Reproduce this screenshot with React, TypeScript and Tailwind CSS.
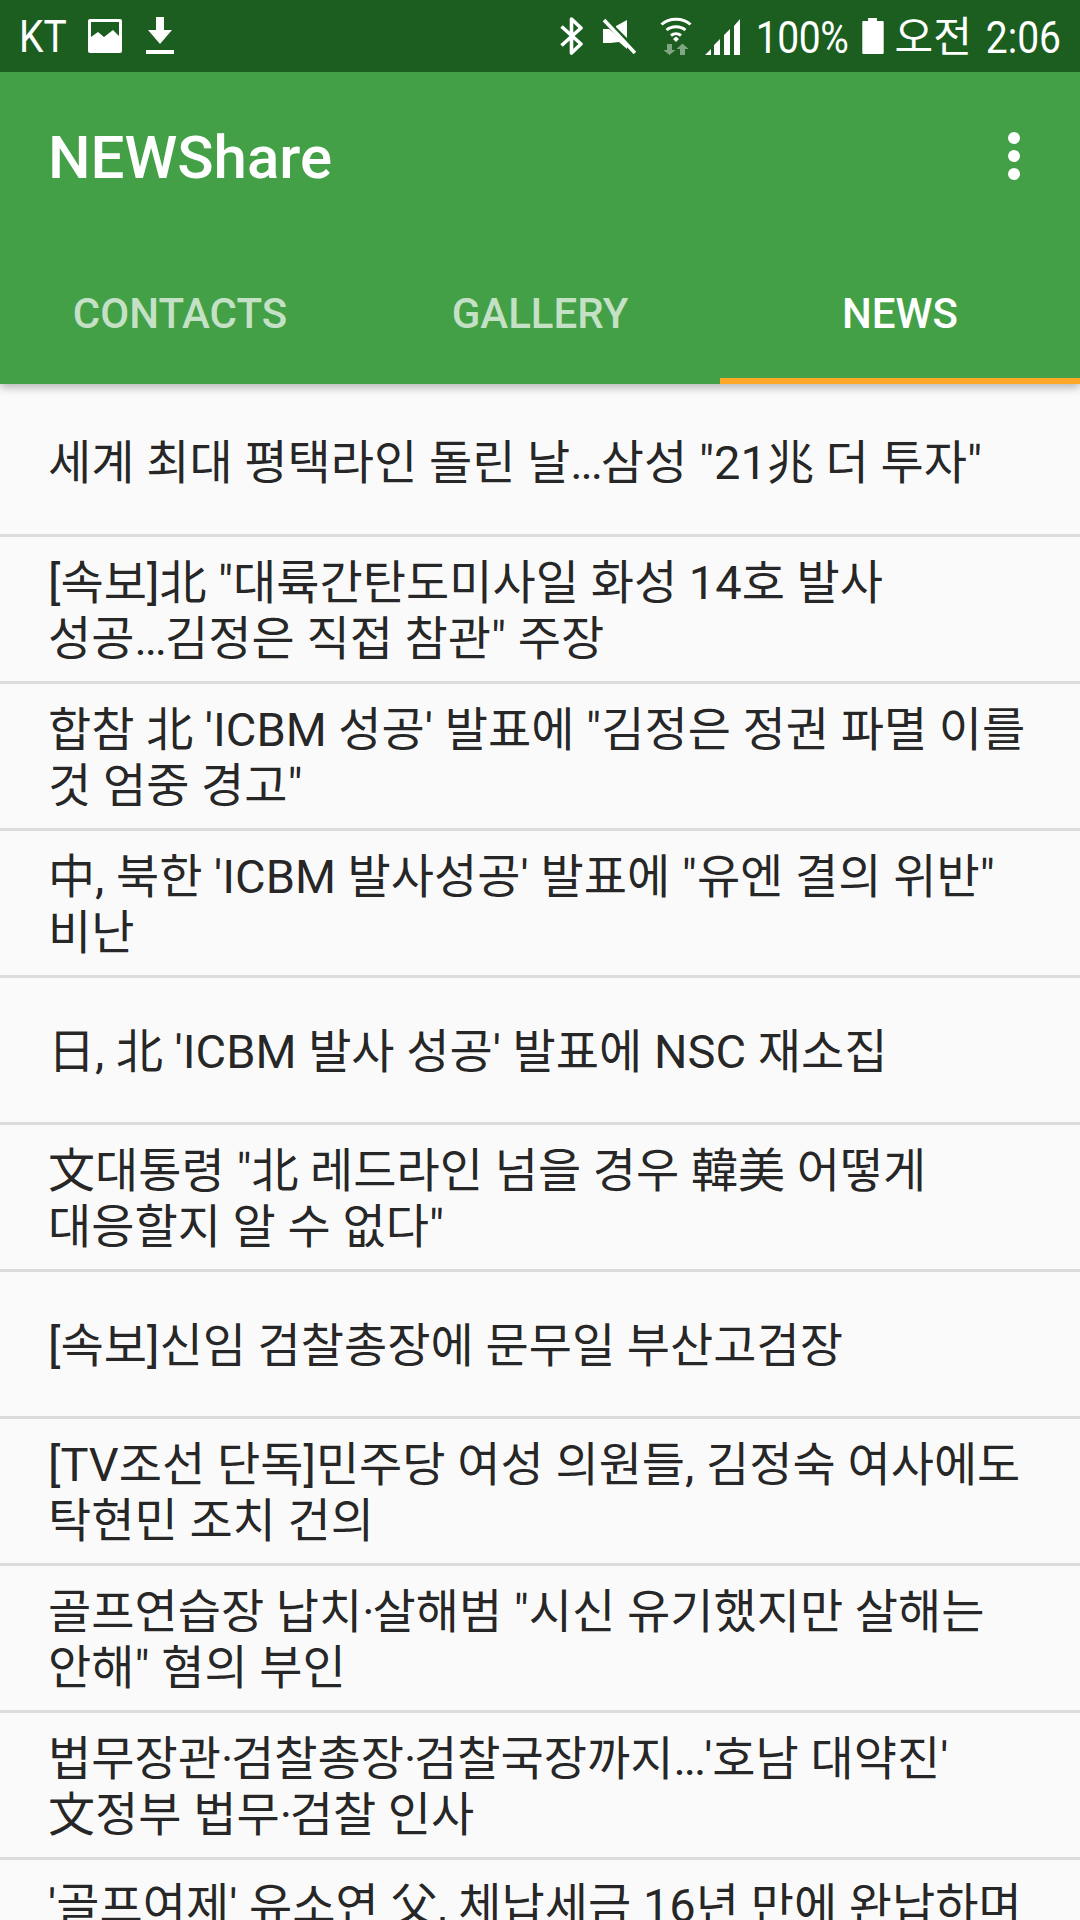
const rows: string[][] = [
  ['세계 최대 평택라인 돌린 날...삼성 "21兆 더 투자"'],
  ['[속보]北 "대륙간탄도미사일 화성 14호 발사', '성공...김정은 직접 참관" 주장'],
  ["합참 北 'ICBM 성공' 발표에 \"김정은 정권 파멸 이를", '것 엄중 경고"'],
  ["中, 북한 'ICBM 발사성공' 발표에 \"유엔 결의 위반\"", '비난'],
  ["日, 北 'ICBM 발사 성공' 발표에 NSC 재소집"],
  ['文대통령 "北 레드라인 넘을 경우 韓美 어떻게', '대응할지 알 수 없다"'],
  ['[속보]신임 검찰총장에 문무일 부산고검장'],
  ['[TV조선 단독]민주당 여성 의원들, 김정숙 여사에도', '탁현민 조치 건의'],
  ['골프연습장 납치·살해범 "시신 유기했지만 살해는', '안해" 혐의 부인'],
  ["법무장관·검찰총장·검찰국장까지...'호남 대약진'", '文정부 법무·검찰 인사'],
  ["'골프여제' 유소연 父, 체납세금 16년 만에 완납하며", '화제'],
];

function Line({ text }: { text: string }) {
  const parts = text.split(/(\.\.\.|·)/);
  return (
    <div className="whitespace-nowrap">
      {parts.map((p, i) =>
        p === '...' || p === '·' ? (
          <span key={i} className="tracking-[-2.2px]">{p}</span>
        ) : (
          <span key={i}>{p}</span>
        ),
      )}
    </div>
  );
}

function StatusLeft() {
  return (
    <div className="flex items-center">
      <span className="inline-block scale-y-[1.12] text-[39px] leading-none ml-[19px] w-[47px] pt-[2px]">KT</span>
      <svg width="36" height="36" viewBox="0 0 36 36" className="ml-[21px]">
        <path fill="#fff" fillRule="evenodd" d="M3 1h30a2 2 0 0 1 2 2v30a2 2 0 0 1-2 2H3a2 2 0 0 1-2-2V3a2 2 0 0 1 2-2zM4 4v15l7-5 6 5 9-7 6 6V4z" />
      </svg>
      <svg width="28" height="38" viewBox="0 0 28 38" className="ml-[23px]">
        <path fill="#fff" d="M10 0h8v13h8L14 27 2 13h8zM0 33h28v4H0z" />
      </svg>
    </div>
  );
}

function StatusRight() {
  return (
    <div className="flex items-center mr-[19px]">
      <svg width="24" height="38" viewBox="0 0 24 38">
        <path fill="none" stroke="#fff" strokeWidth="3.6" strokeLinejoin="round" d="M1.5 9.5 21 27l-9.5 9V2L21 11 1.500 28.500" />
      </svg>
      <svg width="34" height="36" viewBox="0 0 34 36" className="ml-[18px]">
        <path fill="#fff" d="M1 11h6L12 15 25 28v3L17 24v0L8 25H1zM14 8l11-6v18L14 9z" />
        <path stroke="#fff" strokeWidth="3.6" d="M2 2l31 33" />
      </svg>
      <svg width="32" height="38" viewBox="0 0 32 38" className="ml-[24px]">
        <path fill="none" stroke="#fff" strokeWidth="3" d="M1.500 7.500C9 .5 23 .5 30.500 7.500M6.500 13c5-4.500 14-4.500 19 0M11 18.500c3-2.500 7-2.500 10 0" />
        <path fill="#fff" d="M13 22l3-2.500 3 2.500-3 3z" />
        <path fill="#fff" fillOpacity=".45" d="M7 27h5v6h3.500l-6 5-6-5H7zM20 38v-6h-3.500l6-5.500 6 5.500H25v6z" />
      </svg>
      <svg width="36" height="37" viewBox="0 0 36 37" className="ml-[13px]">
        <path fill="#fff" d="M0 37l6-6v6zM9 37V27l6-6v16zM19 37V17l6-6v26zM29 37V8l6-7v36z" />
      </svg>
      <span className="inline-block scale-y-[1.14] text-[39px] leading-none ml-[15px] tracking-[-0.4px] pt-[4px]">100%</span>
      <svg width="24" height="36" viewBox="0 0 24 37" className="ml-[12px]">
        <path fill="#fff" d="M7 0h9v3h6a1 1 0 0 1 1 1v32a1 1 0 0 1-1 1H2a1 1 0 0 1-1-1V4a1 1 0 0 1 1-1h5z" />
      </svg>
      <span className="text-[42px] leading-none ml-[10px] pt-[4px]">오전</span>
      <span className="inline-block scale-y-[1.14] text-[39px] leading-none ml-[14px] pt-[4px]">2:06</span>
    </div>
  );
}

export default function App() {
  return (
    <div className="w-[1080px] h-[1920px] overflow-hidden flex flex-col bg-[#fafafa] font-['Roboto','Noto_Sans_CJK_KR',sans-serif]">
      <header className="relative z-10 bg-[#43a047] shadow-[0_4px_8px_rgba(0,0,0,0.25)] text-white">
        <div className="h-[72px] bg-[#1b5e20] flex items-center justify-between">
          <StatusLeft />
          <StatusRight />
        </div>
        <div className="h-[168px] flex items-center justify-between pl-[48px] pr-[60px] pt-[4px]">
          <span className="text-[60px] font-medium leading-none">NEWShare</span>
          <div className="flex flex-col gap-[6px] -mt-[4px]">
            <span className="block w-[12px] h-[12px] rounded-full bg-white" />
            <span className="block w-[12px] h-[12px] rounded-full bg-white" />
            <span className="block w-[12px] h-[12px] rounded-full bg-white" />
          </div>
        </div>
        <nav className="h-[144px] grid grid-cols-3 text-[42px] font-medium">
          <div className="flex items-center justify-center text-white/70 pt-[2px]">CONTACTS</div>
          <div className="flex items-center justify-center text-white/70 pt-[2px]">GALLERY</div>
          <div className="flex items-center justify-center border-b-[6px] border-[#ffa726] pt-[8px]">NEWS</div>
        </nav>
      </header>
      <main className="flex-1 text-[47px] leading-[56px] text-black/87">
        {rows.map((lines, i) => (
          <div
            key={i}
            className={`flex flex-col justify-center pl-[48px] border-b-[3px] border-[#dcdcdc] shrink-0 ${i === 0 ? 'h-[153px] pt-[7px]' : 'h-[147px] pt-[3px]'}`}
          >
            {lines.map((l) => (
              <Line key={l} text={l} />
            ))}
          </div>
        ))}
      </main>
    </div>
  );
}
